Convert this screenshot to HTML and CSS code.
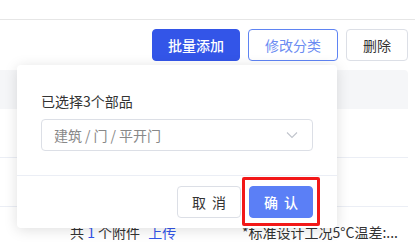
FILE: index.html
```html
<!DOCTYPE html>
<html lang="zh-CN">
<head>
    <meta charset="UTF-8">
    <meta name="viewport" content="width=device-width, initial-scale=1.0">
    <title>部品列表</title>
    <link rel="stylesheet" href="styles.css">
</head>
<body>
    <div class="page">
        <div class="topbar"></div>

        <!-- Toolbar -->
        <div class="toolbar">
            <button class="btn btn-primary">批量添加</button>
            <button class="btn btn-outline">修改分类</button>
            <button class="btn btn-delete">删除</button>
        </div>

        <!-- Table behind the popover -->
        <div class="table">
            <div class="thead"></div>
            <div class="row"></div>
            <div class="row"></div>
            <div class="row row-last">
                <div class="cell cell-files">共 <span class="blue">1</span> 个附件 <span class="blue upload">上传</span></div>
                <div class="cell cell-note">*标准设计工况5°C温差:...</div>
            </div>
        </div>

        <!-- Change category popover -->
        <div class="popover">
            <div class="popover-body">
                <div class="popover-label">已选择3个部品</div>
                <div class="select">
                    <span class="select-value">建筑<span class="sep">/</span>门<span class="sep">/</span>平开门</span>
                    <svg class="select-arrow" width="12" height="8" viewBox="0 0 12 8">
                        <path d="M1 1.5 L6 6.5 L11 1.5" fill="none" stroke="#c0c4cc" stroke-width="1.1"/>
                    </svg>
                </div>
            </div>
            <div class="popover-footer">
                <button class="btn btn-small btn-spaced">取消</button>
                <div class="highlight">
                    <button class="btn btn-small btn-spaced btn-confirm">确认</button>
                </div>
            </div>
        </div>
    </div>
</body>
</html>
```

FILE: styles.css
```css
* {
    box-sizing: border-box;
}

body {
    margin: 0;
    padding: 0;
    background-color: white;
    font-family: "Noto Sans CJK SC", "Noto Sans", sans-serif;
    color: #333;
    overflow: hidden;
}

.page {
    position: relative;
    width: 415px;
    height: 248px;
}

.topbar {
    height: 20px;
    border-bottom: 1px solid #e6e6e6;
}

.toolbar {
    display: flex;
    justify-content: flex-end;
    gap: 8px;
    padding: 9px 7px 0 0;
}

.btn {
    height: 32px;
    padding: 0;
    border: 1px solid #dcdfe6;
    border-radius: 4px;
    background-color: white;
    color: #333;
    font-family: "Noto Sans CJK SC", sans-serif;
    font-size: 14px;
    line-height: 30px;
    text-align: center;
    white-space: nowrap;
    cursor: pointer;
}

.btn-primary {
    width: 88px;
    background-color: #3355e8;
    border-color: #3355e8;
    color: white;
    font-weight: 500;
}

.btn-outline {
    width: 90px;
    border-color: #5f84f3;
    color: #6b8cf2;
}

.btn-delete {
    width: 62px;
}

/* Table */
.table {
    width: 408px;
    margin-top: 9px;
}

.thead {
    height: 39px;
    background-color: #f5f6f8;
    border-top-right-radius: 4px;
}

.row {
    height: 49px;
    border-bottom: 1px solid #ebeef5;
}

.row-last {
    display: flex;
    height: 50px;
    border-bottom: none;
    font-size: 14px;
    line-height: 50px;
}

.cell-files {
    width: 242px;
    padding-left: 70px;
    white-space: nowrap;
}

.cell-note {
    white-space: nowrap;
}

.blue {
    color: #3355e8;
}

.upload {
    margin-left: 5px;
}

/* Popover */
.popover {
    position: absolute;
    left: 17px;
    top: 65px;
    width: 320px;
    background-color: white;
    border-radius: 4px;
    box-shadow: 0 2px 14px rgba(0, 0, 0, 0.13);
}

.popover-body {
    padding: 25px 24px 24px 24px;
    border-bottom: 1px solid #ebeef5;
}

.popover-label {
    font-size: 14px;
    line-height: 22px;
    color: #333;
    margin-bottom: 7px;
}

.select {
    display: flex;
    align-items: center;
    justify-content: space-between;
    height: 32px;
    padding: 0 14px 0 12px;
    border: 1px solid #dcdfe6;
    border-radius: 4px;
}

.select-value {
    font-size: 14px;
    color: #888;
}

.sep {
    margin: 0 3px;
}

.popover-footer {
    display: flex;
    justify-content: flex-end;
    align-items: center;
    gap: 1px;
    padding: 1px 17px 2px 0;
}

.btn-small {
    width: 64px;
}

.btn-spaced {
    letter-spacing: 6px;
    padding-left: 6px;
}

.highlight {
    padding: 6px 4px 5px 4px;
    border: 3px solid #f21818;
    border-radius: 2px;
}

.btn-confirm {
    display: block;
    background-color: #5b7ff6;
    border-color: #5b7ff6;
    color: white;
    font-weight: 500;
}
```
